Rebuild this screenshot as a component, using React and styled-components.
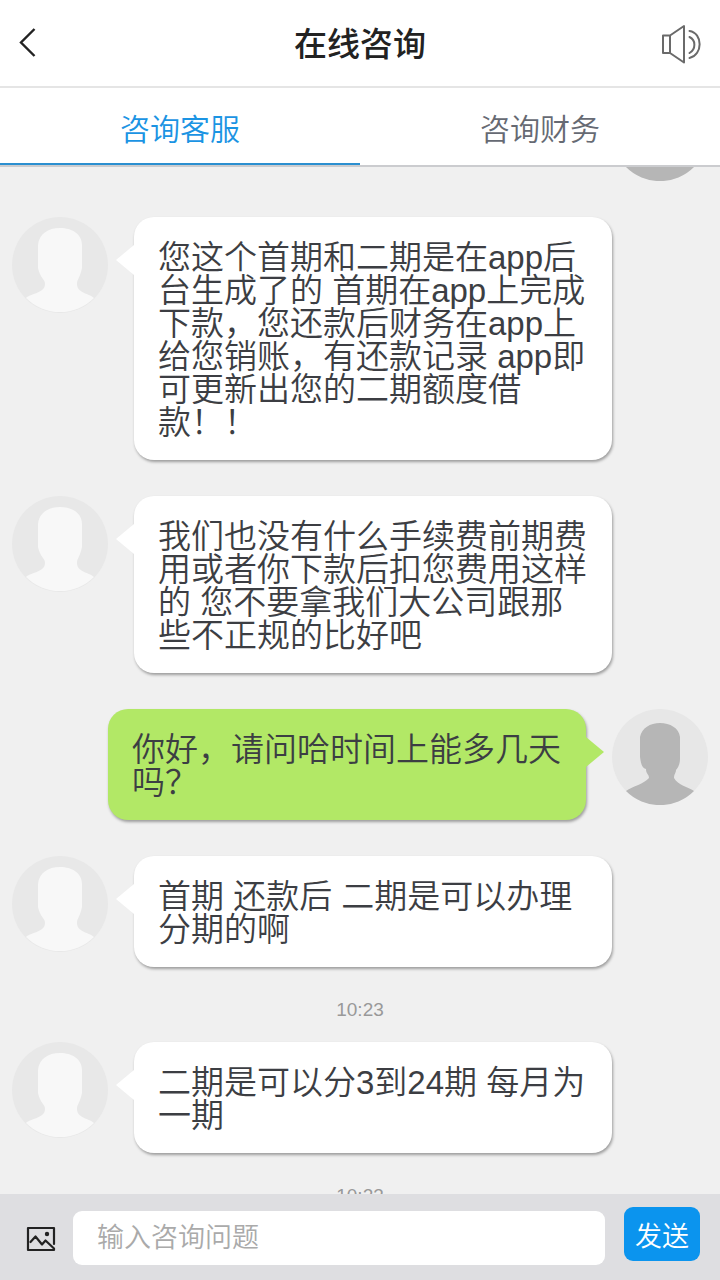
import React, { Component } from 'react'
import styled, { createGlobalStyle } from 'styled-components'

const tabs = ['咨询客服', '咨询财务']

const messages = [
    { type: 'mine' },
    { type: 'service', text: '您这个首期和二期是在app后台生成了的 首期在app上完成下款，您还款后财务在app上给您销账，有还款记录 app即可更新出您的二期额度借款！！' },
    { type: 'service', text: '我们也没有什么手续费前期费用或者你下款后扣您费用这样的 您不要拿我们大公司跟那些不正规的比好吧' },
    { type: 'mine', text: '你好，请问哈时间上能多几天吗？' },
    { type: 'service', text: '首期 还款后 二期是可以办理分期的啊' },
    { type: 'time', text: '10:23' },
    { type: 'service', text: '二期是可以分3到24期 每月为一期' },
    { type: 'time', text: '10:23' },
]

const ServiceAvatar = () => (
    <Avatar viewBox="0 0 96 96" aria-hidden="true">
        <circle cx="48" cy="48" r="48" fill="#e8e8e8" />
        <path d="M14 81C20 76 33 76 33 67C33 62 28 61 26 51V28C27 17 36 11 48 11C60 11 70 17 70 28V51C68 61 65 62 65 67C65 76 76 76 82 81A48 48 0 0 1 14 81Z" fill="#f8f8f8" />
    </Avatar>
)

const MineAvatar = () => (
    <Avatar viewBox="0 0 96 96" aria-hidden="true">
        <circle cx="48" cy="48" r="48" fill="#e7e7e7" />
        <path d="M14 82C21 77 32 75 37 69C37 65 34 65 34 60C30 59 29 55 28 48V28C30 19 38 14 48 14C58 14 67 19 68 28V50C68 55 66 59 64 61C64 64 62 65 62 69C66 76 76 78 82 82A48 48 0 0 1 14 82Z" fill="#b6b6b6" />
    </Avatar>
)

export default class App extends Component {
    constructor(props) {
        super(props)
        this.state = {
            activeTab: 0,
            question: '',
        }
        this.changeHandler = this.changeHandler.bind(this)
    }

    changeHandler(e) {
        this.setState({ question: e.target.value })
    }

    renderMessage(message, index) {
        if (message.type === 'time') {
            return <Time key={index}>{message.text}</Time>
        }
        const mine = message.type === 'mine'
        return (
            <Message key={index} $mine={mine}>
                {mine ? <MineAvatar /> : <ServiceAvatar />}
                {message.text && <Bubble $mine={mine}>{message.text}</Bubble>}
            </Message>
        )
    }

    render() {
        const { activeTab, question } = this.state

        return (
            <Page>
                <GlobalStyle />
                <Header>
                    <IconButton type="button" aria-label="返回">
                        <svg width="18" height="30" viewBox="0 0 18 30" fill="none" stroke="#222" strokeWidth="2.4">
                            <path d="M16.500 1L3 14.500L16.500 28" />
                        </svg>
                    </IconButton>
                    <Title>在线咨询</Title>
                    <IconButton type="button" aria-label="声音">
                        <svg width="42" height="42" viewBox="0 0 42 42" fill="none" stroke="#6a6a6a" strokeWidth="2" strokeLinejoin="round" strokeLinecap="round">
                            <path d="M3 13.500H10V31H3ZM10 13.500L24 4V40.500L10 31" />
                            <path d="M29.500 15C36 18 36 27 29.500 31" />
                            <path d="M29.500 9C43 11 43 33 29.500 36" />
                        </svg>
                    </IconButton>
                </Header>
                <Tabs role="tablist">
                    {tabs.map((tab, index) => (
                        <Tab
                            key={tab}
                            type="button"
                            role="tab"
                            aria-selected={activeTab === index}
                            $active={activeTab === index}
                            onClick={() => this.setState({ activeTab: index })}
                        >
                            {tab}
                        </Tab>
                    ))}
                </Tabs>
                <Chat>
                    <MessageList>
                        {messages.map((message, index) => this.renderMessage(message, index))}
                    </MessageList>
                </Chat>
                <Footer onSubmit={e => e.preventDefault()}>
                    <PictureButton type="button" aria-label="图片">
                        <svg width="30" height="26" viewBox="0 0 30 26" fill="none" stroke="#222" strokeWidth="2.2" strokeLinejoin="round" strokeLinecap="round">
                            <path d="M28 18V2H2V24H28V22.500L19.500 14.500L16 18.500L9.500 10.500L4.500 16" />
                            <circle cx="21" cy="8" r="2.200" fill="#222" stroke="none" />
                        </svg>
                    </PictureButton>
                    <QuestionInput
                        type="text"
                        aria-label="输入咨询问题"
                        placeholder="输入咨询问题"
                        value={question}
                        onChange={this.changeHandler}
                    />
                    <SendButton type="submit">发送</SendButton>
                </Footer>
            </Page>
        )
    }
}

const GlobalStyle = createGlobalStyle`
    * {
        box-sizing: border-box;
    }
    body {
        margin: 0;
        background-color: #f0f0f0;
    }
    body, button, input {
        font-family: 'Liberation Sans', 'Noto Sans CJK SC', sans-serif;
        font-weight: 350;
    }
    button {
        border: 0;
        padding: 0;
        background: none;
        cursor: pointer;
    }
`

const Page = styled.div`
    display: flex;
    flex-direction: column;
    height: 100vh;
    overflow: hidden;
`

const Header = styled.header`
    display: flex;
    align-items: center;
    justify-content: space-between;
    height: 88px;
    padding: 0 18px;
    background-color: #fff;
    border-bottom: 2px solid #e5e5e5;
`

const IconButton = styled.button`
    display: flex;
    flex: 0 0 42px;
    height: 42px;
    align-items: center;
`

const Title = styled.h1`
    margin: 0;
    padding-top: 4px;
    font-size: 33px;
    line-height: 44px;
    font-weight: 500;
    color: #222;
`

const Tabs = styled.div`
    display: flex;
    height: 79px;
    flex: none;
    background-color: #fff;
    border-bottom: 2px solid #cbcccf;
`

const Tab = styled.button`
    flex: 1;
    padding-top: 8px;
    font-size: 30px;
    line-height: 40px;
    color: ${props => (props.$active ? '#1b94e3' : '#666a73')};
    border-bottom: 2px solid ${props => (props.$active ? '#2b8fd0' : 'transparent')};
`

const Chat = styled.main`
    flex: 1;
    min-height: 0;
    overflow: hidden;
    background-color: #f0f0f0;
`

/* pulled up so that the oldest message is scrolled under the tabs */
const MessageList = styled.div`
    display: flex;
    flex-direction: column;
    margin-top: -103px;
    padding: 0 12px;
`

const Message = styled.div`
    display: flex;
    flex-direction: ${props => (props.$mine ? 'row-reverse' : 'row')};
    align-items: flex-start;
    gap: 26px;
    margin: 21px 0 15px;
    padding-left: ${props => (props.$mine ? '96px' : '0')};
    padding-right: ${props => (props.$mine ? '0' : '96px')};
`

const Avatar = styled.svg`
    flex: none;
    width: 96px;
    height: 96px;
`

const Bubble = styled.div`
    position: relative;
    flex: 1;
    padding: 24px 24px 21px;
    border-radius: 20px;
    font-size: 33px;
    line-height: 33px;
    color: #3c3e43;
    background-color: ${props => (props.$mine ? '#b2e866' : '#fff')};
    box-shadow: 1px 2px 3px rgba(0, 0, 0, .35);

    &:after {
        content: "";
        position: absolute;
        top: 28px;
        ${props => (props.$mine ? 'left: 100%;' : 'right: 100%;')}
        border: 15px solid transparent;
        ${props => (props.$mine
            ? 'border-left: 18px solid #b2e866; border-right: 0;'
            : 'border-right: 18px solid #fff; border-left: 0;')}
    }
`

const Time = styled.time`
    padding-top: 17px;
    font-size: 19px;
    line-height: 22px;
    text-align: center;
    color: #999;
`

const Footer = styled.form`
    display: flex;
    flex: none;
    height: 86px;
    padding: 13px 20px 15px;
    background-color: #dedee1;
`

const PictureButton = styled.button`
    display: flex;
    align-items: center;
    justify-content: center;
    width: 42px;
    margin-right: 11px;
    padding-top: 6px;
`

const QuestionInput = styled.input`
    flex: 1;
    min-width: 0;
    height: 54px;
    margin-right: 19px;
    padding: 0 24px;
    align-self: flex-end;
    border: 0;
    border-radius: 9px;
    font-size: 27px;
    color: #3c3e43;
    background-color: #fff;

    &::placeholder {
        color: #aaa;
        opacity: 1;
    }
`

const SendButton = styled.button`
    width: 76px;
    height: 54px;
    border-radius: 9px;
    font-size: 27px;
    color: #fff;
    background-color: #0b94ee;
`
